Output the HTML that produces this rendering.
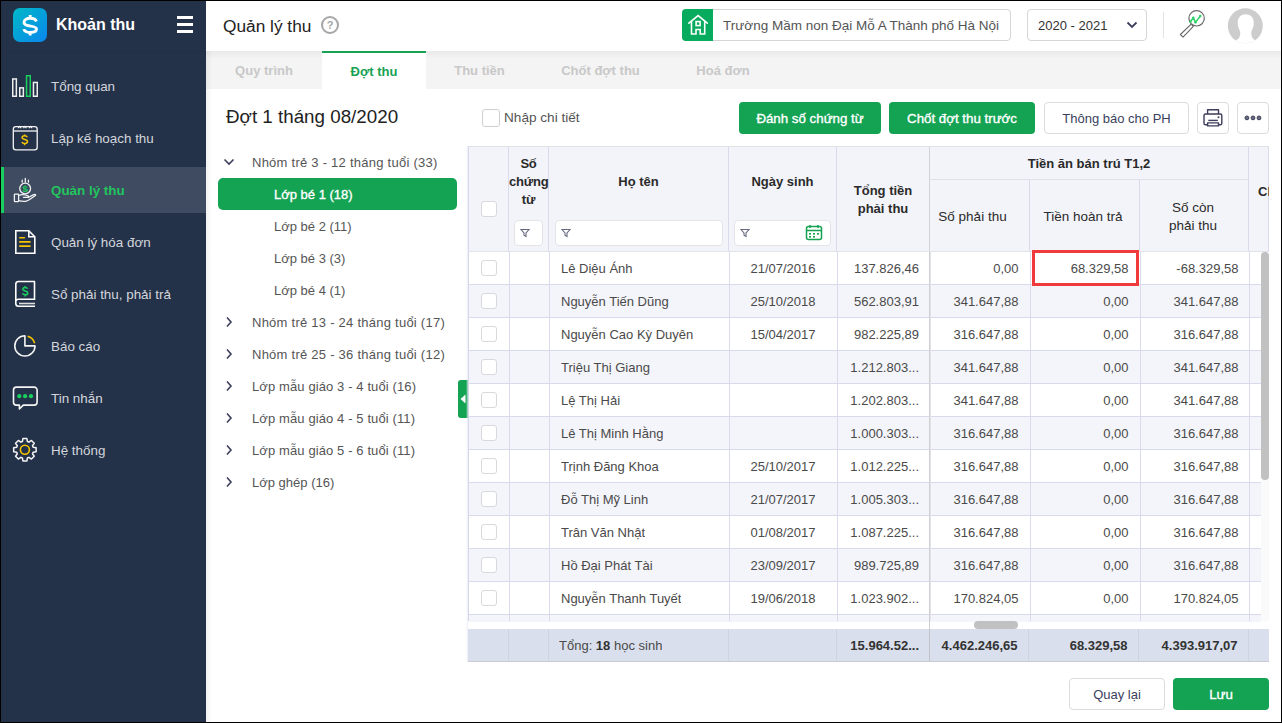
<!DOCTYPE html>
<html><head><meta charset="utf-8">
<style>
*{box-sizing:border-box;margin:0;padding:0}
html,body{width:1282px;height:723px;overflow:hidden;background:#fff}
body{font-family:"Liberation Sans",sans-serif;position:relative;font-size:13px;color:#333}
.a{position:absolute}
.bd{position:absolute;background:#000;z-index:50}
/* sidebar */
#side{position:absolute;left:0;top:0;width:206px;height:723px;background:#243249}
.logo{position:absolute;left:13px;top:8px;width:34px;height:34px;border-radius:7px;background:linear-gradient(135deg,#00b9c6,#0a86ee)}
.brand{position:absolute;left:56px;top:15px;font-size:16px;font-weight:bold;color:#fff;line-height:20px}
.hamb{position:absolute;left:177px;width:16px;height:3px;background:#fff}
.mi{position:absolute;left:1px;width:205px;height:46px}
.mi .t{position:absolute;left:50px;top:0;line-height:48px;font-size:13.4px;color:#d3d6dc;white-space:nowrap}
.mi svg{position:absolute;left:0;top:0}
.mi.act{background:#3e4b61}
.mi.act .t{color:#22c55e;font-weight:bold}
.mi.act:before{content:"";position:absolute;left:0;top:0;width:3px;height:46px;background:#19d05f}
/* header */
#hdr{position:absolute;left:206px;top:0;width:1076px;height:51px;background:#fff}
#tabs{position:absolute;left:206px;top:51px;width:1076px;height:38px;background:linear-gradient(#e9e9e9,#f4f4f4 8px)}
.tab{position:absolute;top:0;height:38px;line-height:40px;text-align:center;font-weight:bold;font-size:13px;color:#c8c8c8}
.tab.act{background:#fff;color:#17a253;border-top:2px solid #17a253;line-height:38px}
.btn{position:absolute;height:32px;line-height:34px;text-align:center;border-radius:4px;font-size:13px;white-space:nowrap}
.bg{background:#13a353;color:#fff;font-size:13.3px;-webkit-text-stroke:.35px #fff}
.bw{background:#fff;border:1px solid #dcdcdc;color:#3b3f5c;line-height:32px}
/* tree */
.tr{position:absolute;height:32px;line-height:34px;font-size:13px;color:#555;white-space:nowrap}
/* table */
.c{position:absolute;overflow:hidden;white-space:nowrap;height:33px;line-height:33px;top:0}
.hd{font-weight:bold;color:#2a2a2a;text-align:center;font-size:13px}
.row{position:absolute;left:468px;width:793px;height:33px;overflow:hidden}
.row.g{background:#f4f5fa}
.num{text-align:right;padding-right:10px}
.cb{position:absolute;width:15px;height:15px;border:1px solid #d9d9dc;border-radius:3px;background:#fff}
.vl{position:absolute;width:1px;background:#d9dbec}
.hl{position:absolute;height:1px;background:#d9dbec}
</style></head>
<body>
<!-- SIDEBAR -->
<div id="side">
  <div class="logo">
    <svg width="34" height="34" viewBox="0 0 34 34"><path d="M23.4 13.4C22.7 11.4 20.3 10.2 17.2 10.2 13.5 10.2 11 11.9 11 14.4 11 19.6 23.5 16.8 23.5 21.1 23.5 23.2 21 24.5 17.2 24.5 13.9 24.5 11.5 23.2 10.8 21.1M17.2 6.9v3.4M17.2 24.4v3.2" fill="none" stroke="#fff" stroke-width="2.9"/></svg>
  </div>
  <div class="brand">Khoản thu</div>
  <div class="hamb" style="top:16px"></div>
  <div class="hamb" style="top:22.5px"></div>
  <div class="hamb" style="top:29.5px"></div>

  <div class="mi" style="top:63px">
    <svg width="50" height="46" viewBox="0 0 50 46"><g fill="none" stroke-width="1.5"><rect x="11.75" y="15.95" width="3.6" height="17.3" stroke="#eee"/><rect x="18.75" y="24.85" width="3.6" height="8.4" stroke="#eee"/><rect x="25.55" y="12.75" width="3.7" height="20.5" stroke="#19d05f"/><rect x="32.45" y="19.45" width="3.8" height="13.8" stroke="#eee"/></g></svg>
    <div class="t">Tổng quan</div>
  </div>
  <div class="mi" style="top:115px">
    <svg width="50" height="46" viewBox="0 0 50 46"><g fill="none" stroke="#f4f4f4" stroke-width="1.3"><rect x="12.3" y="11.6" width="23.9" height="23.2" rx="2.6"/><line x1="12.3" y1="16" x2="36.2" y2="16"/><path d="M17.4 13.2c0-1 .5-1.7 1.2-1.7s1.2.7 1.2 1.7M22.7 13.2c0-1 .5-1.7 1.2-1.7s1.2.7 1.2 1.7M28.3 13.2c0-1 .5-1.7 1.2-1.7s1.2.7 1.2 1.7"/></g><path d="M26.3 22.2c-.4-.9-1.4-1.5-2.6-1.5-1.5 0-2.6.8-2.6 1.9 0 2.6 5.4 1.4 5.4 4 0 1.2-1.1 2-2.8 2-1.4 0-2.5-.7-2.8-1.7M23.6 19.4v1.3M23.6 28.6v1.7" fill="none" stroke="#f5c400" stroke-width="1.5"/></svg>
    <div class="t">Lập kế hoạch thu</div>
  </div>
  <div class="mi act" style="top:167px">
    <svg width="50" height="46" viewBox="0 0 50 46"><g fill="none" stroke="#f2f2f2" stroke-width="1.3" stroke-linecap="round" stroke-linejoin="round"><circle cx="24.15" cy="21.5" r="5.4"/><path d="M21.2 13.2v2M24.3 11.3v3.9M27.4 13.2v2"/><rect x="13.4" y="27.2" width="4.2" height="7.5" rx=".6"/><path d="M17.6 28.4c2.2-.9 4.5-1.1 6.8-.4l2.6.8c.7.3.6 1.4-.2 1.5h-4.3"/><path d="M17.6 33.6c2.6.7 5.3 1.1 7.8.5 1.2-.3 2.2-.9 3.2-1.6l5.8-4c.5-.5.2-1.2-.5-1.2-.6 0-1.2.3-1.8.6l-4.8 2.6"/></g><text x="24.2" y="24.9" text-anchor="middle" font-size="9.6" font-weight="bold" fill="#19d05f" font-family="Liberation Sans">$</text></svg>
    <div class="t">Quản lý thu</div>
  </div>
  <div class="mi" style="top:219px">
    <svg width="50" height="46" viewBox="0 0 50 46"><g fill="none" stroke="#fff" stroke-width="1.6"><path d="M14.8 11.8h13l6 6v16.4h-19z"/><path d="M27.8 11.8v6h6"/></g><g stroke="#f5c400" stroke-width="1.6" stroke-linecap="round"><path d="M18.8 18.7h4.6M18.8 22.9h10.2M18.8 27.1h10.2"/></g></svg>
    <div class="t">Quản lý hóa đơn</div>
  </div>
  <div class="mi" style="top:271px">
    <svg width="50" height="46" viewBox="0 0 50 46"><g fill="none" stroke="#fff" stroke-width="1.6"><path d="M34 10.5H17.5c-1.5 0-2.7 1.2-2.7 2.7v19.3c0 1.5 1.2 2.7 2.7 2.7H34"/><path d="M15 29.8c.3-1 1-1.6 2.3-1.6H33.5V10.5"/><path d="M18 32.5h16" stroke="#ddd"/></g><path d="M26.6 17.8c-.4-.9-1.3-1.4-2.4-1.4-1.4 0-2.4.7-2.4 1.8 0 2.4 5 1.3 5 3.7 0 1.1-1 1.9-2.6 1.9-1.3 0-2.3-.6-2.6-1.6M24.1 15v1.3M24.1 23.8v1.6" fill="none" stroke="#19d05f" stroke-width="1.5"/></svg>
    <div class="t">Sổ phải thu, phải trả</div>
  </div>
  <div class="mi" style="top:323px">
    <svg width="50" height="46" viewBox="0 0 50 46"><g fill="none" stroke-width="1.6"><path d="M23.9 12.8A10.1 10.1 0 1 0 34 22.9H23.9z" stroke="#f4f4f4" stroke-linejoin="round"/><path d="M26.6 13.2A10 10 0 0 1 33.7 20.3" stroke="#f5c400"/></g></svg>
    <div class="t">Báo cáo</div>
  </div>
  <div class="mi" style="top:375px">
    <svg width="50" height="46" viewBox="0 0 50 46"><path d="M15.4 12.1h17.8a2.9 2.9 0 0 1 2.9 2.9v12.2a2.9 2.9 0 0 1-2.9 2.9H22.3l-3.9 3.9v-3.9h-3a2.9 2.9 0 0 1-2.9-2.9V15a2.9 2.9 0 0 1 2.9-2.9z" fill="none" stroke="#f4f4f4" stroke-width="1.6" stroke-linejoin="round"/><g fill="#19d05f"><circle cx="18.3" cy="21.2" r="2.1"/><circle cx="24.1" cy="21.2" r="2.1"/><circle cx="30" cy="21.2" r="2.1"/></g></svg>
    <div class="t">Tin nhắn</div>
  </div>
  <div class="mi" style="top:427px">
    <svg width="50" height="46" viewBox="0 0 50 46"><path d="M21.39 14.53 L21.92 11.52 L25.88 11.52 L26.41 14.53 L27.94 15.16 L30.44 13.41 L33.24 16.21 L31.49 18.71 L32.12 20.24 L35.13 20.77 L35.13 24.73 L32.12 25.26 L31.49 26.79 L33.24 29.29 L30.44 32.09 L27.94 30.34 L26.41 30.97 L25.88 33.98 L21.92 33.98 L21.39 30.97 L19.86 30.34 L17.36 32.09 L14.56 29.29 L16.31 26.79 L15.68 25.26 L12.67 24.73 L12.67 20.77 L15.68 20.24 L16.31 18.71 L14.56 16.21 L17.36 13.41 L19.86 15.16Z" fill="none" stroke="#f4f4f4" stroke-width="1.5" stroke-linejoin="round"/><circle cx="23.9" cy="22.75" r="4.5" fill="none" stroke="#f5c400" stroke-width="1.6"/></svg>
    <div class="t">Hệ thống</div>
  </div>
</div>

<div class="a" style="left:1px;top:51px;width:205px;height:1px;background:rgba(0,0,0,.05)"></div>
<!-- HEADER -->
<div id="hdr">
</div>
<div class="a" style="left:223px;top:15px;font-size:17.3px;line-height:22px;color:#222">Quản lý thu</div>
<svg class="a" style="left:320px;top:15px" width="20" height="20" viewBox="0 0 20 20"><circle cx="10" cy="10" r="8" fill="none" stroke="#a6a6a6" stroke-width="2"/><text x="10" y="14.2" text-anchor="middle" font-size="11" font-weight="bold" fill="#a6a6a6" font-family="Liberation Sans">?</text></svg>

<div class="a" style="left:682px;top:9px;width:329px;height:32px;border:1px solid #d6d6d6;border-radius:4px;background:#fff"></div>
<div class="a" style="left:682px;top:9px;width:31px;height:32px;border-radius:4px 0 0 4px;background:#07ab5d">
  <svg width="31" height="32" viewBox="0 0 31 32"><g fill="none" stroke="#fff" stroke-width="1.6" stroke-linejoin="miter" stroke-linecap="round"><path d="M6.9 14.2L16.1 6.6l9.2 7.6"/><path d="M9.5 12.2v12.8H14v-4.5h4.2v4.5h4.5V12.2"/><rect x="14.1" y="12.6" width="4" height="4"/></g></svg>
</div>
<div class="a" style="left:723px;top:16px;font-size:13.5px;line-height:20px;color:#555;white-space:nowrap">Trường Mầm non Đại Mỗ A Thành phố Hà Nội</div>

<div class="a" style="left:1027px;top:9px;width:120px;height:32px;border:1px solid #d6d6d6;border-radius:4px;background:#fff"></div>
<div class="a" style="left:1038px;top:16px;font-size:13px;line-height:20px;color:#333">2020 - 2021</div>
<svg class="a" style="left:1126px;top:20px" width="12" height="10" viewBox="0 0 12 10"><path d="M1.5 2.5l4.5 4.5 4.5-4.5" fill="none" stroke="#3b3f5c" stroke-width="1.8"/></svg>
<div class="a" style="left:1163px;top:12px;width:1px;height:26px;background:#e2e2e2"></div>
<svg class="a" style="left:1177px;top:8px" width="30" height="30" viewBox="0 0 30 30"><path d="M14.2 16.2l-10.8 10.3 2.6 2.6 10.3-10.8z" fill="#fff" stroke="#666" stroke-width="1.1" stroke-linejoin="round"/><circle cx="19.6" cy="10.3" r="7.7" fill="#fff" stroke="#6a6a6a" stroke-width="1.2"/><path d="M13.4 13.8l2.9-4.2 2.2 4.8 4.8-6.4" fill="none" stroke="#2fd06a" stroke-width="1.5" stroke-linejoin="round"/><g fill="#2fd06a"><circle cx="13.4" cy="13.8" r="1.2"/><circle cx="16.3" cy="9.6" r="1.2"/><circle cx="18.5" cy="14.4" r="1.2"/><circle cx="23.3" cy="8" r="1.2"/></g></svg>
<svg class="a" style="left:1227px;top:8px" width="37" height="37" viewBox="0 0 37 37"><defs><clipPath id="avc"><circle cx="18.3" cy="17.8" r="17.5"/></clipPath></defs><g clip-path="url(#avc)"><rect width="37" height="37" fill="#cdcdcd"/><path d="M18.6 6.3c-4.6 0-7.9 3.2-7.9 8.3 0 2.8.6 5.2 1.7 7.2.8 1.5 1.1 3.2.7 4.9l-.6 2.4c-.3 1.2-1.3 2-2.5 2.6-1.4.7-3 1.2-3.5 2.3V37h24.5v-2.9c-.6-1.1-2.3-1.7-3.6-2.4-1.2-.6-2.1-1.4-2.4-2.6l-.6-2.4c-.4-1.7-.1-3.4.7-4.9 1.1-2 1.7-4.4 1.7-7.2 0-5.1-3.6-8.3-8.2-8.3z" fill="#fff"/></g></svg>

<!-- TABS -->
<div id="tabs">
  <div class="tab" style="left:0;width:116px">Quy trình</div>
  <div class="tab act" style="left:116px;width:104px">Đợt thu</div>
  <div class="tab" style="left:220px;width:107px">Thu tiền</div>
  <div class="tab" style="left:327px;width:135px">Chốt đợt thu</div>
  <div class="tab" style="left:462px;width:110px">Hoá đơn</div>
</div>

<!-- LEFT TREE -->
<div class="a" style="left:226px;top:105px;font-size:18.8px;line-height:24px;color:#222;white-space:nowrap">Đợt 1 tháng 08/2020</div>
<div class="a" style="left:218px;top:178px;width:239px;height:32px;border-radius:5px;background:#13a353"></div>
<svg class="a" style="left:222px;top:156px" width="14" height="12" viewBox="0 0 14 12"><path d="M2.5 3.5l4.5 4.5 4.5-4.5" fill="none" stroke="#3b3f5c" stroke-width="1.6"/></svg>
<div class="tr" style="left:252px;top:146px;letter-spacing:.25px">Nhóm trẻ 3 - 12 tháng tuổi (33)</div>
<div class="tr" style="left:274px;top:178px;color:#fff;-webkit-text-stroke:.35px #fff">Lớp bé 1 (18)</div>
<div class="tr" style="left:274px;top:210px">Lớp bé 2 (11)</div>
<div class="tr" style="left:274px;top:242px">Lớp bé 3 (3)</div>
<div class="tr" style="left:274px;top:274px">Lớp bé 4 (1)</div>
<div class="tr" style="left:252px;top:306px;letter-spacing:.25px">Nhóm trẻ 13 - 24 tháng tuổi (17)</div>
<div class="tr" style="left:252px;top:338px;letter-spacing:.25px">Nhóm trẻ 25 - 36 tháng tuổi (12)</div>
<div class="tr" style="left:252px;top:370px;letter-spacing:.11px">Lớp mẫu giáo 3 - 4 tuổi (16)</div>
<div class="tr" style="left:252px;top:402px;letter-spacing:.11px">Lớp mẫu giáo 4 - 5 tuổi (11)</div>
<div class="tr" style="left:252px;top:434px;letter-spacing:.11px">Lớp mẫu giáo 5 - 6 tuổi (11)</div>
<div class="tr" style="left:252px;top:466px">Lớp ghép (16)</div>
<svg class="a" style="left:222px;top:316px" width="14" height="180" viewBox="0 0 14 180"><g fill="none" stroke="#3b3f5c" stroke-width="1.6"><path d="M5 1.5l4 4.5-4 4.5"/><path d="M5 33.5l4 4.5-4 4.5"/><path d="M5 65.5l4 4.5-4 4.5"/><path d="M5 97.5l4 4.5-4 4.5"/><path d="M5 129.5l4 4.5-4 4.5"/><path d="M5 161.5l4 4.5-4 4.5"/></g></svg>
<div class="a" style="left:458px;top:380px;width:10px;height:38px;background:#13a353;border-radius:3px 0 0 3px"><svg width="10" height="38" viewBox="0 0 10 38"><path d="M2.5 19l5-4.5v9z" fill="#fff"/></svg></div>

<!-- TOOLBAR -->
<div class="cb" style="left:482px;top:109px;width:18px;height:18px;border-color:#cfcfcf"></div>
<div class="a" style="left:504px;top:108px;line-height:20px;color:#555;font-size:13.6px">Nhập chi tiết</div>
<div class="btn bg" style="left:739px;top:102px;width:142px">Đánh số chứng từ</div>
<div class="btn bg" style="left:889px;top:102px;width:146px">Chốt đợt thu trước</div>
<div class="btn bw" style="left:1044px;top:102px;width:145px">Thông báo cho PH</div>
<div class="btn bw" style="left:1197px;top:102px;width:32px;height:32px"><svg width="30" height="30" viewBox="0 0 30 30" style="position:absolute;left:0;top:0"><g fill="none" stroke="#3b3d5a" stroke-width="1.4" stroke-linejoin="round"><path d="M9.6 11V6.8h10.9V11"/><path d="M9 21.8H7.6c-.9 0-1.6-.7-1.6-1.6v-7.6c0-.9.7-1.6 1.6-1.6h14.6c.9 0 1.6.7 1.6 1.6v7.6c0 .9-.7 1.6-1.6 1.6H21"/><path d="M10.3 17.4h9.5"/><path d="M9.6 19.9h10.9v3H9.6z"/></g><circle cx="20.5" cy="14.3" r="1" fill="#3b3d5a"/></svg></div>
<div class="btn bw" style="left:1237px;top:102px;width:32px;height:32px"><svg width="30" height="30" viewBox="0 0 30 30" style="position:absolute;left:0;top:0"><g fill="#6b6e82" stroke="#3b3d5a" stroke-width="1"><circle cx="8.9" cy="14.9" r="1.9"/><circle cx="15" cy="14.9" r="1.9"/><circle cx="21" cy="14.9" r="1.9"/></g></svg></div>

<!-- TABLE -->
<!--TBL-->
<div class="a" style="left:466px;top:146px;width:2px;height:516px;background:linear-gradient(90deg,rgba(230,232,245,0),rgba(230,232,245,.8))"></div>
<div class="a" style="left:468px;top:146px;width:801px;height:106px;background:#f3f4f9;border-top:1px solid #e0e1e4;border-left:1px solid #d6d8ea"></div>
<div class="a" style="left:468px;top:251px;width:801px;height:1px;background:#e2e3e8"></div>
<div class="vl" style="left:508px;top:147px;height:104px"></div>
<div class="vl" style="left:548px;top:147px;height:104px"></div>
<div class="vl" style="left:728px;top:147px;height:104px"></div>
<div class="vl" style="left:836px;top:147px;height:104px"></div>
<div class="a" style="left:929px;top:147px;width:1px;height:104px;background:#d2d2d6"></div>
<div class="vl" style="left:1248px;top:147px;height:104px"></div>
<div class="vl" style="left:1268px;top:147px;height:104px"></div>
<div class="vl" style="left:1029px;top:180px;height:71px"></div>
<div class="vl" style="left:1139px;top:180px;height:71px"></div>
<div class="a" style="left:930px;top:179px;width:318px;height:1px;background:#e0e1e8"></div>
<div class="a hd" style="left:509px;top:155px;width:39px;line-height:18px;white-space:normal;letter-spacing:-.2px">Số<br>chứng<br>từ</div>
<div class="a hd" style="left:549px;top:172px;width:179px;line-height:20px">Họ tên</div>
<div class="a hd" style="left:729px;top:172px;width:107px;line-height:20px">Ngày sinh</div>
<div class="a hd" style="left:837px;top:182px;width:92px;line-height:17.5px">Tổng tiền<br>phải thu</div>
<div class="a hd" style="left:930px;top:154px;width:318px;line-height:20px">Tiền ăn bán trú T1,2</div>
<div class="a hd" style="left:930px;top:207px;width:85px;line-height:20px;font-weight:normal;font-size:13.5px">Số phải thu</div>
<div class="a hd" style="left:1030px;top:207px;width:106px;line-height:20px;font-weight:normal;font-size:13.5px">Tiền hoàn trả</div>
<div class="a hd" style="left:1140px;top:199px;width:106px;line-height:17.5px;font-weight:normal;font-size:13.5px">Số còn<br>phải thu</div>
<div class="a" style="left:1249px;top:147px;width:20px;height:104px;overflow:hidden"><div class="a hd" style="left:9px;top:35px;line-height:20px">Ch</div></div>
<div class="cb" style="left:481px;top:201px;width:16px;height:16px"></div>
<div class="a" style="left:514px;top:220px;width:29px;height:26px;background:#fff;border:1px solid #e4e4e8;border-radius:4px"><svg width="10" height="10" viewBox="0 0 10 10" style="position:absolute;left:5px;top:7px"><path d="M1 1.5h8L6 5v3.5L4 7.3V5z" fill="none" stroke="#676a7e" stroke-width="1.1"/></svg></div>
<div class="a" style="left:555px;top:220px;width:168px;height:26px;background:#fff;border:1px solid #e4e4e8;border-radius:4px"><svg width="10" height="10" viewBox="0 0 10 10" style="position:absolute;left:5px;top:7px"><path d="M1 1.5h8L6 5v3.5L4 7.3V5z" fill="none" stroke="#676a7e" stroke-width="1.1"/></svg></div>
<div class="a" style="left:734px;top:220px;width:97px;height:26px;background:#fff;border:1px solid #e4e4e8;border-radius:4px"><svg width="10" height="10" viewBox="0 0 10 10" style="position:absolute;left:5px;top:7px"><path d="M1 1.5h8L6 5v3.5L4 7.3V5z" fill="none" stroke="#676a7e" stroke-width="1.1"/></svg></div>
<svg class="a" style="left:805px;top:224px" width="18" height="17" viewBox="0 0 18 17"><g fill="none" stroke="#17a253" stroke-width="1.5"><rect x="1.5" y="2.5" width="15" height="13" rx="2"/><path d="M1.5 6.5h15M5 1v3M13 1v3"/></g><g fill="#17a253"><rect x="4" y="9" width="2" height="1.6"/><rect x="8" y="9" width="2" height="1.6"/><rect x="12" y="9" width="2" height="1.6"/><rect x="4" y="12" width="2" height="1.6"/><rect x="8" y="12" width="2" height="1.6"/></g></svg>
<div class="a" style="left:469px;top:252px;width:792px;height:32px;background:#ffffff"></div>
<div class="hl" style="left:468px;top:284px;width:793px"></div>
<div class="cb" style="left:481px;top:260px;width:16px;height:16px"></div>
<div class="a c" style="left:561px;top:252px;line-height:34px;color:#4a4a4a">Lê Diệu Ánh</div>
<div class="a c" style="left:729px;top:252px;width:108px;line-height:34px;color:#4a4a4a;text-align:center">21/07/2016</div>
<div class="a c" style="left:830px;top:252px;width:89px;line-height:34px;color:#4a4a4a;text-align:right">137.826,46</div>
<div class="a c" style="left:930px;top:252px;width:88.5px;line-height:34px;color:#4a4a4a;text-align:right">0,00</div>
<div class="a c" style="left:1030px;top:252px;width:98.5px;line-height:34px;color:#4a4a4a;text-align:right">68.329,58</div>
<div class="a c" style="left:1140px;top:252px;width:98.5px;line-height:34px;color:#4a4a4a;text-align:right">-68.329,58</div>
<div class="a" style="left:469px;top:285px;width:792px;height:32px;background:#f4f5fa"></div>
<div class="hl" style="left:468px;top:317px;width:793px"></div>
<div class="cb" style="left:481px;top:293px;width:16px;height:16px"></div>
<div class="a c" style="left:561px;top:285px;line-height:34px;color:#4a4a4a">Nguyễn Tiến Dũng</div>
<div class="a c" style="left:729px;top:285px;width:108px;line-height:34px;color:#4a4a4a;text-align:center">25/10/2018</div>
<div class="a c" style="left:830px;top:285px;width:89px;line-height:34px;color:#4a4a4a;text-align:right">562.803,91</div>
<div class="a c" style="left:930px;top:285px;width:88.5px;line-height:34px;color:#4a4a4a;text-align:right">341.647,88</div>
<div class="a c" style="left:1030px;top:285px;width:98.5px;line-height:34px;color:#4a4a4a;text-align:right">0,00</div>
<div class="a c" style="left:1140px;top:285px;width:98.5px;line-height:34px;color:#4a4a4a;text-align:right">341.647,88</div>
<div class="a" style="left:469px;top:318px;width:792px;height:32px;background:#ffffff"></div>
<div class="hl" style="left:468px;top:350px;width:793px"></div>
<div class="cb" style="left:481px;top:326px;width:16px;height:16px"></div>
<div class="a c" style="left:561px;top:318px;line-height:34px;color:#4a4a4a">Nguyễn Cao Kỳ Duyên</div>
<div class="a c" style="left:729px;top:318px;width:108px;line-height:34px;color:#4a4a4a;text-align:center">15/04/2017</div>
<div class="a c" style="left:830px;top:318px;width:89px;line-height:34px;color:#4a4a4a;text-align:right">982.225,89</div>
<div class="a c" style="left:930px;top:318px;width:88.5px;line-height:34px;color:#4a4a4a;text-align:right">316.647,88</div>
<div class="a c" style="left:1030px;top:318px;width:98.5px;line-height:34px;color:#4a4a4a;text-align:right">0,00</div>
<div class="a c" style="left:1140px;top:318px;width:98.5px;line-height:34px;color:#4a4a4a;text-align:right">316.647,88</div>
<div class="a" style="left:469px;top:351px;width:792px;height:32px;background:#f4f5fa"></div>
<div class="hl" style="left:468px;top:383px;width:793px"></div>
<div class="cb" style="left:481px;top:359px;width:16px;height:16px"></div>
<div class="a c" style="left:561px;top:351px;line-height:34px;color:#4a4a4a">Triệu Thị Giang</div>
<div class="a c" style="left:830px;top:351px;width:89px;line-height:34px;color:#4a4a4a;text-align:right">1.212.803...</div>
<div class="a c" style="left:930px;top:351px;width:88.5px;line-height:34px;color:#4a4a4a;text-align:right">341.647,88</div>
<div class="a c" style="left:1030px;top:351px;width:98.5px;line-height:34px;color:#4a4a4a;text-align:right">0,00</div>
<div class="a c" style="left:1140px;top:351px;width:98.5px;line-height:34px;color:#4a4a4a;text-align:right">341.647,88</div>
<div class="a" style="left:469px;top:384px;width:792px;height:32px;background:#ffffff"></div>
<div class="hl" style="left:468px;top:416px;width:793px"></div>
<div class="cb" style="left:481px;top:392px;width:16px;height:16px"></div>
<div class="a c" style="left:561px;top:384px;line-height:34px;color:#4a4a4a">Lệ Thị Hải</div>
<div class="a c" style="left:830px;top:384px;width:89px;line-height:34px;color:#4a4a4a;text-align:right">1.202.803...</div>
<div class="a c" style="left:930px;top:384px;width:88.5px;line-height:34px;color:#4a4a4a;text-align:right">341.647,88</div>
<div class="a c" style="left:1030px;top:384px;width:98.5px;line-height:34px;color:#4a4a4a;text-align:right">0,00</div>
<div class="a c" style="left:1140px;top:384px;width:98.5px;line-height:34px;color:#4a4a4a;text-align:right">341.647,88</div>
<div class="a" style="left:469px;top:417px;width:792px;height:32px;background:#f4f5fa"></div>
<div class="hl" style="left:468px;top:449px;width:793px"></div>
<div class="cb" style="left:481px;top:425px;width:16px;height:16px"></div>
<div class="a c" style="left:561px;top:417px;line-height:34px;color:#4a4a4a">Lê Thị Minh Hằng</div>
<div class="a c" style="left:830px;top:417px;width:89px;line-height:34px;color:#4a4a4a;text-align:right">1.000.303...</div>
<div class="a c" style="left:930px;top:417px;width:88.5px;line-height:34px;color:#4a4a4a;text-align:right">316.647,88</div>
<div class="a c" style="left:1030px;top:417px;width:98.5px;line-height:34px;color:#4a4a4a;text-align:right">0,00</div>
<div class="a c" style="left:1140px;top:417px;width:98.5px;line-height:34px;color:#4a4a4a;text-align:right">316.647,88</div>
<div class="a" style="left:469px;top:450px;width:792px;height:32px;background:#ffffff"></div>
<div class="hl" style="left:468px;top:482px;width:793px"></div>
<div class="cb" style="left:481px;top:458px;width:16px;height:16px"></div>
<div class="a c" style="left:561px;top:450px;line-height:34px;color:#4a4a4a">Trịnh Đăng Khoa</div>
<div class="a c" style="left:729px;top:450px;width:108px;line-height:34px;color:#4a4a4a;text-align:center">25/10/2017</div>
<div class="a c" style="left:830px;top:450px;width:89px;line-height:34px;color:#4a4a4a;text-align:right">1.012.225...</div>
<div class="a c" style="left:930px;top:450px;width:88.5px;line-height:34px;color:#4a4a4a;text-align:right">316.647,88</div>
<div class="a c" style="left:1030px;top:450px;width:98.5px;line-height:34px;color:#4a4a4a;text-align:right">0,00</div>
<div class="a c" style="left:1140px;top:450px;width:98.5px;line-height:34px;color:#4a4a4a;text-align:right">316.647,88</div>
<div class="a" style="left:469px;top:483px;width:792px;height:32px;background:#f4f5fa"></div>
<div class="hl" style="left:468px;top:515px;width:793px"></div>
<div class="cb" style="left:481px;top:491px;width:16px;height:16px"></div>
<div class="a c" style="left:561px;top:483px;line-height:34px;color:#4a4a4a">Đỗ Thị Mỹ Linh</div>
<div class="a c" style="left:729px;top:483px;width:108px;line-height:34px;color:#4a4a4a;text-align:center">21/07/2017</div>
<div class="a c" style="left:830px;top:483px;width:89px;line-height:34px;color:#4a4a4a;text-align:right">1.005.303...</div>
<div class="a c" style="left:930px;top:483px;width:88.5px;line-height:34px;color:#4a4a4a;text-align:right">316.647,88</div>
<div class="a c" style="left:1030px;top:483px;width:98.5px;line-height:34px;color:#4a4a4a;text-align:right">0,00</div>
<div class="a c" style="left:1140px;top:483px;width:98.5px;line-height:34px;color:#4a4a4a;text-align:right">316.647,88</div>
<div class="a" style="left:469px;top:516px;width:792px;height:32px;background:#ffffff"></div>
<div class="hl" style="left:468px;top:548px;width:793px"></div>
<div class="cb" style="left:481px;top:524px;width:16px;height:16px"></div>
<div class="a c" style="left:561px;top:516px;line-height:34px;color:#4a4a4a">Trân Văn Nhật</div>
<div class="a c" style="left:729px;top:516px;width:108px;line-height:34px;color:#4a4a4a;text-align:center">01/08/2017</div>
<div class="a c" style="left:830px;top:516px;width:89px;line-height:34px;color:#4a4a4a;text-align:right">1.087.225...</div>
<div class="a c" style="left:930px;top:516px;width:88.5px;line-height:34px;color:#4a4a4a;text-align:right">316.647,88</div>
<div class="a c" style="left:1030px;top:516px;width:98.5px;line-height:34px;color:#4a4a4a;text-align:right">0,00</div>
<div class="a c" style="left:1140px;top:516px;width:98.5px;line-height:34px;color:#4a4a4a;text-align:right">316.647,88</div>
<div class="a" style="left:469px;top:549px;width:792px;height:32px;background:#f4f5fa"></div>
<div class="hl" style="left:468px;top:581px;width:793px"></div>
<div class="cb" style="left:481px;top:557px;width:16px;height:16px"></div>
<div class="a c" style="left:561px;top:549px;line-height:34px;color:#4a4a4a">Hồ Đại Phát Tài</div>
<div class="a c" style="left:729px;top:549px;width:108px;line-height:34px;color:#4a4a4a;text-align:center">23/09/2017</div>
<div class="a c" style="left:830px;top:549px;width:89px;line-height:34px;color:#4a4a4a;text-align:right">989.725,89</div>
<div class="a c" style="left:930px;top:549px;width:88.5px;line-height:34px;color:#4a4a4a;text-align:right">316.647,88</div>
<div class="a c" style="left:1030px;top:549px;width:98.5px;line-height:34px;color:#4a4a4a;text-align:right">0,00</div>
<div class="a c" style="left:1140px;top:549px;width:98.5px;line-height:34px;color:#4a4a4a;text-align:right">316.647,88</div>
<div class="a" style="left:469px;top:582px;width:792px;height:32px;background:#ffffff"></div>
<div class="hl" style="left:468px;top:614px;width:793px"></div>
<div class="cb" style="left:481px;top:590px;width:16px;height:16px"></div>
<div class="a c" style="left:561px;top:582px;line-height:34px;color:#4a4a4a">Nguyễn Thanh Tuyết</div>
<div class="a c" style="left:729px;top:582px;width:108px;line-height:34px;color:#4a4a4a;text-align:center">19/06/2018</div>
<div class="a c" style="left:830px;top:582px;width:89px;line-height:34px;color:#4a4a4a;text-align:right">1.023.902...</div>
<div class="a c" style="left:930px;top:582px;width:88.5px;line-height:34px;color:#4a4a4a;text-align:right">170.824,05</div>
<div class="a c" style="left:1030px;top:582px;width:98.5px;line-height:34px;color:#4a4a4a;text-align:right">0,00</div>
<div class="a c" style="left:1140px;top:582px;width:98.5px;line-height:34px;color:#4a4a4a;text-align:right">170.824,05</div>
<div class="a" style="left:469px;top:615px;width:792px;height:7px;background:#f4f5fa"></div>
<div class="a" style="left:468px;top:252px;width:1px;height:369px;background:#d6d8ea"></div>
<div class="vl" style="left:509px;top:252px;height:369px"></div>
<div class="vl" style="left:549px;top:252px;height:369px"></div>
<div class="vl" style="left:729px;top:252px;height:369px"></div>
<div class="vl" style="left:837px;top:252px;height:369px"></div>
<div class="vl" style="left:1030px;top:252px;height:369px"></div>
<div class="vl" style="left:1140px;top:252px;height:369px"></div>
<div class="vl" style="left:1249px;top:252px;height:369px"></div>
<div class="a" style="left:929px;top:252px;width:1px;height:377px;background:#cfcfd3"></div>
<div class="a" style="left:930px;top:252px;width:1px;height:369px;background:#e4e4e8"></div>
<div class="a" style="left:1032px;top:250px;width:107px;height:36px;border:3px solid #f03a3c"></div>
<div class="a" style="left:1261px;top:252px;width:8px;height:369px;background:#fafafa"></div>
<div class="a" style="left:1261px;top:252px;width:8px;height:228px;background:#c1c1c1;border-radius:4px"></div>
<div class="a" style="left:974px;top:621px;width:44px;height:8px;background:#c1c1c1;border-radius:4px"></div>
<div class="a" style="left:468px;top:629px;width:801px;height:33px;background:#d9dfec;border-bottom:1px solid #c9ccd3"></div>
<div class="a" style="left:508px;top:629px;width:1px;height:32px;background:#cdd3e3"></div>
<div class="a" style="left:548px;top:629px;width:1px;height:32px;background:#cdd3e3"></div>
<div class="a" style="left:728px;top:629px;width:1px;height:32px;background:#cdd3e3"></div>
<div class="a" style="left:836px;top:629px;width:1px;height:32px;background:#cdd3e3"></div>
<div class="a" style="left:1028px;top:629px;width:1px;height:32px;background:#cdd3e3"></div>
<div class="a" style="left:1138px;top:629px;width:1px;height:32px;background:#cdd3e3"></div>
<div class="a" style="left:1248px;top:629px;width:1px;height:32px;background:#cdd3e3"></div>
<div class="a" style="left:929px;top:629px;width:1px;height:32px;background:#c4c4c8"></div>
<div class="a c" style="left:559px;top:629px;line-height:34px;color:#4a4a4a">Tổng: <b style="color:#333">18</b> học sinh</div>
<div class="a c" style="left:830px;top:629px;width:89px;line-height:34px;color:#333;text-align:right;font-weight:bold">15.964.52...</div>
<div class="a c" style="left:930px;top:629px;width:87.5px;line-height:34px;color:#333;text-align:right;font-weight:bold">4.462.246,65</div>
<div class="a c" style="left:1030px;top:629px;width:97.5px;line-height:34px;color:#333;text-align:right;font-weight:bold">68.329,58</div>
<div class="a c" style="left:1140px;top:629px;width:97.5px;line-height:34px;color:#333;text-align:right;font-weight:bold">4.393.917,07</div>
<!--/TBL-->

<!-- BOTTOM BUTTONS -->
<div class="btn bw" style="left:1069px;top:678px;width:96px">Quay lại</div>
<div class="btn bg" style="left:1173px;top:678px;width:96px">Lưu</div>

<div class="a" style="left:206px;top:51px;width:6px;height:672px;background:linear-gradient(90deg,rgba(0,0,0,.05),rgba(0,0,0,0));z-index:40"></div>
<!-- FRAME BORDER -->
<div class="bd" style="left:0;top:0;width:1282px;height:1px"></div>
<div class="bd" style="left:0;top:722px;width:1282px;height:1px"></div>
<div class="bd" style="left:0;top:0;width:1px;height:723px"></div>
<div class="bd" style="left:1281px;top:0;width:1px;height:723px"></div>
</body></html>
